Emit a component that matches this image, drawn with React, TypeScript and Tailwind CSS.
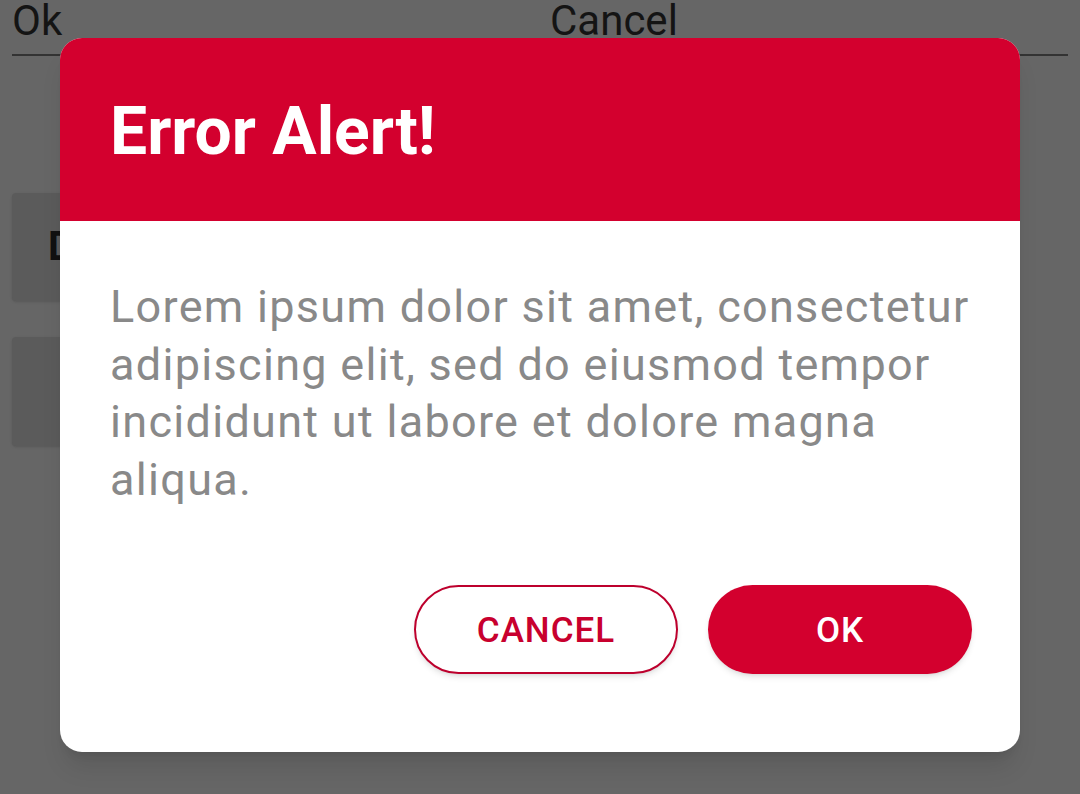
import React from "react";

export default function App() {
  return (
    <div
      className="relative w-[1080px] h-[794px] overflow-hidden bg-[#666666]"
      style={{ fontFamily: "Roboto, 'Noto Sans', sans-serif" }}
    >
      {/* background content */}
      <div className="flex gap-[18px] px-[12px]">
        <div className="flex-1 border-b-[2px] border-[#333333] pb-[12px]">
          <div className="text-[42px] leading-[42px] text-[#141414]">Ok</div>
        </div>
        <div className="flex-1 border-b-[2px] border-[#333333] pb-[12px]">
          <div className="text-[42px] leading-[42px] text-[#141414] pl-[1px]">Cancel</div>
        </div>
      </div>
      <div className="flex flex-col gap-[36px] px-[12px] mt-[137px]">
        <div className="h-[108px] w-[500px] rounded-[4px] bg-[#5b5b5b] shadow-sm flex items-center pl-[36px]">
          <span className="text-[40px] font-bold text-[#111]">D</span>
        </div>
        <div className="h-[109px] w-[500px] rounded-[4px] bg-[#5b5b5b] shadow-sm" />
      </div>

      {/* dialog */}
      <div className="absolute left-[60px] top-[38px] w-[960px] h-[714px] rounded-[22px] bg-white overflow-hidden flex flex-col shadow-xl">
        <div className="h-[183px] bg-[#d3002e] flex items-center pl-[50px] pt-[4px]">
          <h1 className="text-[66px] font-bold text-white leading-none">Error Alert!</h1>
        </div>
        <div className="flex-1 flex flex-col pl-[50px] pr-[48px] pt-[57px]">
          <p className="text-[45px] leading-[57.5px] tracking-[1.3px] text-[#898989]">
            Lorem ipsum dolor sit amet, consectetur
            <br />
            adipiscing elit, sed do eiusmod tempor
            <br />
            incididunt ut labore et dolore magna
            <br />
            aliqua.
          </p>
          <div className="flex justify-end gap-[30px] mt-[77px]">
            <button className="w-[264px] h-[89px] rounded-full border-[2px] border-[#bd002d] bg-white text-[#c8002e] text-[35px] font-medium tracking-[1px] pt-[3px] shadow-md">
              CANCEL
            </button>
            <button className="w-[264px] h-[89px] rounded-full bg-[#d3002e] text-white text-[35px] font-medium tracking-[1px] pt-[3px] shadow-md">
              OK
            </button>
          </div>
        </div>
      </div>
    </div>
  );
}
